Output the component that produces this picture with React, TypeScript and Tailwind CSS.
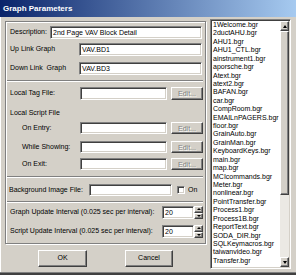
import type { ReactNode } from "react";

const files = [
  "1Welcome.bgr",
  "2ductAHU.bgr",
  "AHU1.bgr",
  "AHU1_CTL.bgr",
  "ainstrument1.bgr",
  "aporsche.bgr",
  "Atext.bgr",
  "atext2.bgr",
  "BAFAN.bgr",
  "car.bgr",
  "CompRoom.bgr",
  "EMAILnPAGERS.bgr",
  "floor.bgr",
  "GrainAuto.bgr",
  "GrainMan.bgr",
  "KeyboardKeys.bgr",
  "main.bgr",
  "map.bgr",
  "MCIcommands.bgr",
  "Meter.bgr",
  "nonlinear.bgr",
  "PointTransfer.bgr",
  "Process1.bgr",
  "Process1B.bgr",
  "ReportText.bgr",
  "SODA_DIR.bgr",
  "SQLKeymacros.bgr",
  "taiwanvideo.bgr",
  "Transfer.bgr",
];

function Sunken({ className = "", children }: { className?: string; children?: ReactNode }) {
  return (
    <div
      className={`box-border border border-t-[#808080] border-l-[#808080] border-b-white border-r-white bg-white shadow-[inset_1px_1px_0_#404040,inset_-1px_-1px_0_#d4d0c8] ${className}`}
    >
      {children}
    </div>
  );
}

function Raised({ className = "", children }: { className?: string; children?: ReactNode }) {
  return (
    <div
      className={`box-border flex items-center justify-center border border-t-white border-l-white border-b-[#404040] border-r-[#404040] bg-[#d4d0c8] shadow-[inset_-1px_-1px_0_#808080] ${className}`}
    >
      {children}
    </div>
  );
}

function Etch({ className = "" }: { className?: string }) {
  return <div className={`box-border h-[2px] ml-[1px] mr-[2px] border-t border-t-[#808080] border-b border-b-white ${className}`} />;
}

function TextBox({ value, className = "" }: { value?: string; className?: string }) {
  return (
    <Sunken className={`h-full flex items-center pl-[2px] ${className}`}>
      <span className="leading-none">{value}</span>
    </Sunken>
  );
}

function EditButton() {
  return (
    <Raised className="w-[32px] h-full">
      <span className="text-[#808080] [text-shadow:1px_1px_0_#fff] leading-none">Edit...</span>
    </Raised>
  );
}

function Spin({ value }: { value: string }) {
  return (
    <div className="flex h-full">
      <TextBox value={value} className="w-[32px]" />
      <div className="flex w-[9px] flex-col">
        <Raised className="flex-1">
          <div className="h-0 w-0 border-x-[2px] border-x-transparent border-b-[2px] border-b-black" />
        </Raised>
        <Raised className="flex-1">
          <div className="h-0 w-0 border-x-[2px] border-x-transparent border-t-[2px] border-t-black" />
        </Raised>
      </div>
    </div>
  );
}

export default function App() {
  return (
    <div className="flex h-[275px] w-[296px] flex-col overflow-hidden bg-[#d4d0c8] font-['Liberation_Sans',Arial,sans-serif] text-[7px] text-black">
      <div className="flex h-[17px] shrink-0 items-center bg-[linear-gradient(to_right,#0a246a,#a6caf0)] pl-[3px]">
        <span className="text-[8px] font-bold text-white">Graph Parameters</span>
      </div>

      <div className="flex flex-1 border-l border-l-white pl-[4px] pt-[2px]">
        <div className="flex w-[201px] flex-col">
          <div className="mt-[2px] box-border flex h-[223px] flex-col border border-[#808080] shadow-[inset_1px_1px_0_#fff,1px_1px_0_#fff]">
            <div className="mt-[4px] flex h-[13px] items-center pl-[4px] pr-[3px]">
              <span className="w-[40px] shrink-0">Description:</span>
              <TextBox value="2nd Page VAV Block Detail" className="flex-1" />
            </div>
            <div className="mt-[4px] flex h-[13px] items-center pl-[4px] pr-[3px]">
              <span className="w-[69px] shrink-0">Up Link Graph</span>
              <TextBox value="VAV.BD1" className="flex-1" />
            </div>
            <div className="mt-[6px] flex h-[13px] items-center pl-[4px] pr-[3px]">
              <span className="w-[69px] shrink-0 whitespace-pre">Down Link  Graph</span>
              <TextBox value="VAV.BD3" className="flex-1" />
            </div>

            <Etch className="mt-[5px]" />

            <div className="mt-[5px] flex h-[13px] items-center pl-[4px] pr-[2px]">
              <span className="w-[70px] shrink-0">Local Tag File:</span>
              <TextBox className="w-[87px]" />
              <div className="ml-[4px] h-full">
                <EditButton />
              </div>
            </div>
            <div className="mt-[8px] flex h-[10px] items-center pl-[4px]">Local Script File</div>
            <div className="mt-[4px] flex h-[12px] items-center pl-[16px] pr-[2px]">
              <span className="w-[58px] shrink-0">On Entry:</span>
              <TextBox className="w-[87px]" />
              <div className="ml-[4px] h-full">
                <EditButton />
              </div>
            </div>
            <div className="mt-[7px] flex h-[12px] items-center pl-[16px] pr-[2px]">
              <span className="w-[58px] shrink-0">While Showing:</span>
              <TextBox className="w-[87px]" />
              <div className="ml-[4px] h-full">
                <EditButton />
              </div>
            </div>
            <div className="mt-[5px] flex h-[12px] items-center pl-[16px] pr-[2px]">
              <span className="w-[58px] shrink-0">On Exit:</span>
              <TextBox className="w-[87px]" />
              <div className="ml-[4px] h-full">
                <EditButton />
              </div>
            </div>

            <Etch className="mt-[6px]" />

            <div className="mt-[6px] flex h-[12px] items-center pl-[3px]">
              <span className="w-[80px] shrink-0">Background Image File:</span>
              <TextBox className="w-[83px]" />
              <Sunken className="ml-[5px] h-[8px] w-[8px]" />
              <span className="ml-[3px]">On</span>
            </div>

            <Etch className="mt-[5px]" />

            <div className="mt-[3px] flex h-[13px] items-center pl-[4px]">
              <span className="w-[152px] shrink-0">Graph Update Interval (0.025 sec per interval):</span>
              <Spin value="20" />
            </div>
            <div className="mt-[6px] flex h-[13px] items-center pl-[4px]">
              <span className="w-[152px] shrink-0">Script Update Interval (0.025 sec per interval):</span>
              <Spin value="20" />
            </div>
          </div>

          <div className="mt-[6px] flex">
            <Raised className="ml-[33px] h-[17px] w-[49px]">OK</Raised>
            <Raised className="ml-[38px] h-[17px] w-[48px]">Cancel</Raised>
          </div>
        </div>

        <div className="ml-[4px] box-border flex h-[250px] w-[81px] border border-t-[#808080] border-l-[#808080] border-b-white border-r-white p-[1px] shadow-[inset_1px_1px_0_#404040,inset_-1px_-1px_0_#d4d0c8]">
          <div className="flex flex-1 overflow-hidden bg-white">
            <div className="flex-1 overflow-hidden pl-[1px] leading-[8.42px]">
              {files.map((f) => (
                <div key={f} className="whitespace-nowrap">
                  {f}
                </div>
              ))}
            </div>
            <div className="flex w-[9px] flex-col bg-[#ebe9e4]">
              <Raised className="h-[10px]">
                <div className="h-0 w-0 border-x-[2px] border-x-transparent border-b-[3px] border-b-black" />
              </Raised>
              <Raised className="h-[164px]" />
              <div className="flex-1" />
              <Raised className="h-[10px]">
                <div className="h-0 w-0 border-x-[2px] border-x-transparent border-t-[3px] border-t-black" />
              </Raised>
            </div>
          </div>
        </div>
      </div>

      <div className="h-[1px] shrink-0 bg-[#808080]" />
      <div className="h-[2px] shrink-0 bg-[#404040]" />
    </div>
  );
}
